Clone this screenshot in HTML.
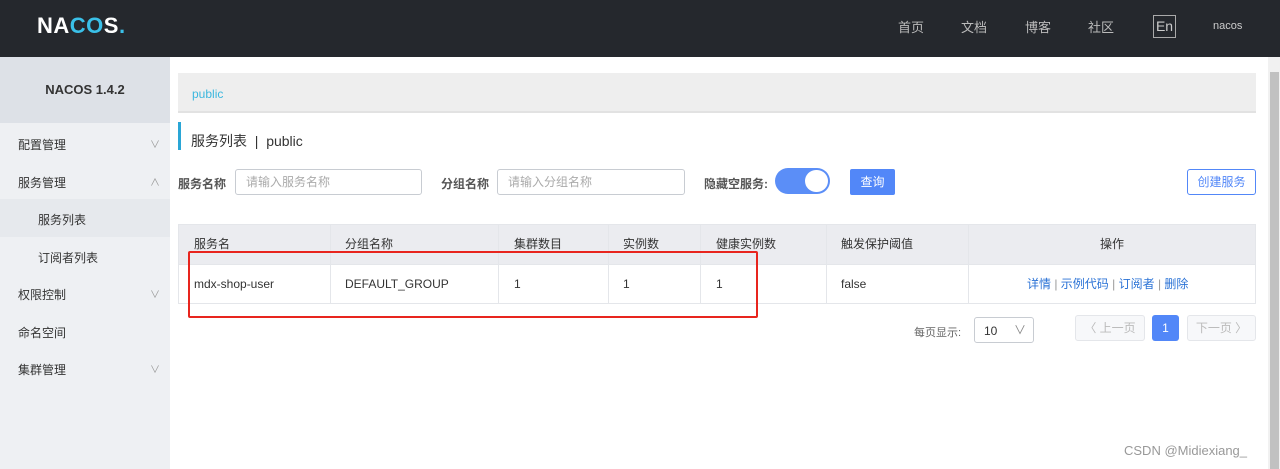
<!DOCTYPE html>
<html><head><meta charset="utf-8"><style>
*{box-sizing:border-box;margin:0;padding:0}
body{width:1280px;height:469px;overflow:hidden;background:#fff;font-family:"Liberation Sans","Noto Sans CJK SC",sans-serif;font-size:12px;color:#333;position:relative}
.a{position:absolute}
.hdr{left:0;top:0;width:1280px;height:57px;background:#25282d}
.nav{color:#bbb;font-size:13px;top:17px}
.side{left:0;top:57px;width:170px;height:412px;background:#eef0f3}
.si{left:18px;color:#333;font-size:12px}
.ch{left:150px;color:#999;font-size:10px}
.th{top:224px;height:40px;line-height:40px;color:#333}
.td{top:264px;height:40px;line-height:40px;color:#333}
.vl{width:1px;background:#e4e6ea;top:224px;height:80px}
.inp{border:1px solid #c8ccd2;border-radius:3px;height:26px;color:#aaa;padding-left:10px;line-height:24px;font-size:12px}
</style></head><body>
<div class="a hdr"></div>
<div class="a" style="left:37px;top:13px;color:#fff;font-size:22px;font-weight:bold;letter-spacing:0.5px">NA<span style="color:#3ac0e8">CO</span>S<span style="color:#3ac0e8">.</span></div>
<div class="a nav" style="left:898px">首页</div>
<div class="a nav" style="left:961px">文档</div>
<div class="a nav" style="left:1025px">博客</div>
<div class="a nav" style="left:1088px">社区</div>
<div class="a" style="left:1153px;top:15px;width:23px;height:23px;border:1px solid #aaa;color:#ccc;font-size:14px;text-align:center;line-height:21px">En</div>
<div class="a" style="left:1213px;top:20px;color:#ccc;font-size:11px">nacos</div>

<div class="a side"></div>
<div class="a" style="left:0;top:57px;width:170px;height:66px;background:#dde1e7"></div>
<div class="a" style="left:0;top:82px;width:170px;text-align:center;font-weight:bold;font-size:13px;color:#333">NACOS 1.4.2</div>
<div class="a si" style="top:136px">配置管理</div><div class="a ch" style="top:136px">∨</div>
<div class="a si" style="top:174px">服务管理</div><div class="a ch" style="top:174px">∧</div>
<div class="a" style="left:0;top:199px;width:170px;height:38px;background:#e6e9ed"></div>
<div class="a si" style="left:38px;top:211px">服务列表</div>
<div class="a si" style="left:38px;top:249px">订阅者列表</div>
<div class="a si" style="top:286px">权限控制</div><div class="a ch" style="top:286px">∨</div>
<div class="a si" style="top:324px">命名空间</div>
<div class="a si" style="top:361px">集群管理</div><div class="a ch" style="top:361px">∨</div>

<div class="a" style="left:1268px;top:57px;width:12px;height:412px;background:#f1f1f1"></div>
<div class="a" style="left:1270px;top:72px;width:9px;height:397px;background:#c1c1c1"></div>

<div class="a" style="left:178px;top:73px;width:1078px;height:40px;background:#eeeeee;border-bottom:2px solid #e2e2e2"></div>
<div class="a" style="left:192px;top:87px;color:#3bb7de;font-size:12px">public</div>
<div class="a" style="left:178px;top:122px;width:3px;height:28px;background:#2aa6d6"></div>
<div class="a" style="left:191px;top:131px;font-size:14px;color:#333">服务列表 &nbsp;|&nbsp; public</div>

<div class="a" style="left:178px;top:175px;font-weight:bold;color:#555">服务名称</div>
<div class="a inp" style="left:235px;top:169px;width:187px">请输入服务名称</div>
<div class="a" style="left:441px;top:175px;font-weight:bold;color:#555">分组名称</div>
<div class="a inp" style="left:497px;top:169px;width:188px">请输入分组名称</div>
<div class="a" style="left:704px;top:175px;font-weight:bold;color:#555">隐藏空服务:</div>
<div class="a" style="left:775px;top:168px;width:55px;height:26px;border-radius:13px;background:#5b8ef7"></div>
<div class="a" style="left:805px;top:170px;width:23px;height:22px;border-radius:11px;background:#fff"></div>
<div class="a" style="left:850px;top:169px;width:45px;height:26px;background:#5287f8;border-radius:2px;color:#fff;text-align:center;line-height:26px">查询</div>
<div class="a" style="left:1187px;top:169px;width:69px;height:26px;border:1px solid #5287f8;border-radius:3px;color:#5287f8;text-align:center;line-height:24px">创建服务</div>

<div class="a" style="left:178px;top:224px;width:1078px;height:80px;border:1px solid #e4e6ea"></div>
<div class="a" style="left:179px;top:225px;width:1076px;height:39px;background:#ebecf0"></div>
<div class="a" style="left:179px;top:264px;width:1076px;height:1px;background:#e4e6ea"></div>
<div class="a vl" style="left:330px"></div><div class="a vl" style="left:498px"></div><div class="a vl" style="left:608px"></div><div class="a vl" style="left:700px"></div><div class="a vl" style="left:826px"></div><div class="a vl" style="left:968px"></div>
<div class="a th" style="left:194px">服务名</div>
<div class="a th" style="left:345px">分组名称</div>
<div class="a th" style="left:514px">集群数目</div>
<div class="a th" style="left:623px">实例数</div>
<div class="a th" style="left:716px">健康实例数</div>
<div class="a th" style="left:841px">触发保护阈值</div>
<div class="a th" style="left:1100px">操作</div>
<div class="a td" style="left:194px">mdx-shop-user</div>
<div class="a td" style="left:345px">DEFAULT_GROUP</div>
<div class="a td" style="left:514px">1</div>
<div class="a td" style="left:623px">1</div>
<div class="a td" style="left:716px">1</div>
<div class="a td" style="left:841px">false</div>
<div class="a td" style="left:1027px;color:#2a72d6">详情 <span style="color:#999">|</span> 示例代码 <span style="color:#999">|</span> 订阅者 <span style="color:#999">|</span> 删除</div>

<div class="a" style="left:188px;top:251px;width:570px;height:67px;border:2px solid #e8251e;border-radius:2px"></div>

<div class="a" style="left:914px;top:324px;color:#666;font-size:11px">每页显示:</div>
<div class="a" style="left:974px;top:317px;width:60px;height:26px;border:1px solid #c8ccd2;border-radius:3px"></div>
<div class="a" style="left:984px;top:324px;font-size:12px">10</div>
<div class="a" style="left:1014px;top:321px;color:#888;font-size:12px">∨</div>
<div class="a" style="left:1075px;top:315px;width:70px;height:26px;border:1px solid #e4e6ea;background:#f7f8fa;border-radius:3px;color:#bbb;text-align:center;line-height:24px">〈 上一页</div>
<div class="a" style="left:1152px;top:315px;width:27px;height:26px;background:#5287f8;border-radius:3px;color:#fff;text-align:center;line-height:26px">1</div>
<div class="a" style="left:1187px;top:315px;width:69px;height:26px;border:1px solid #e4e6ea;background:#f7f8fa;border-radius:3px;color:#bbb;text-align:center;line-height:24px">下一页 〉</div>

<div class="a" style="left:1124px;top:443px;color:#999;font-size:13px">CSDN @Midiexiang_</div>
</body></html>
